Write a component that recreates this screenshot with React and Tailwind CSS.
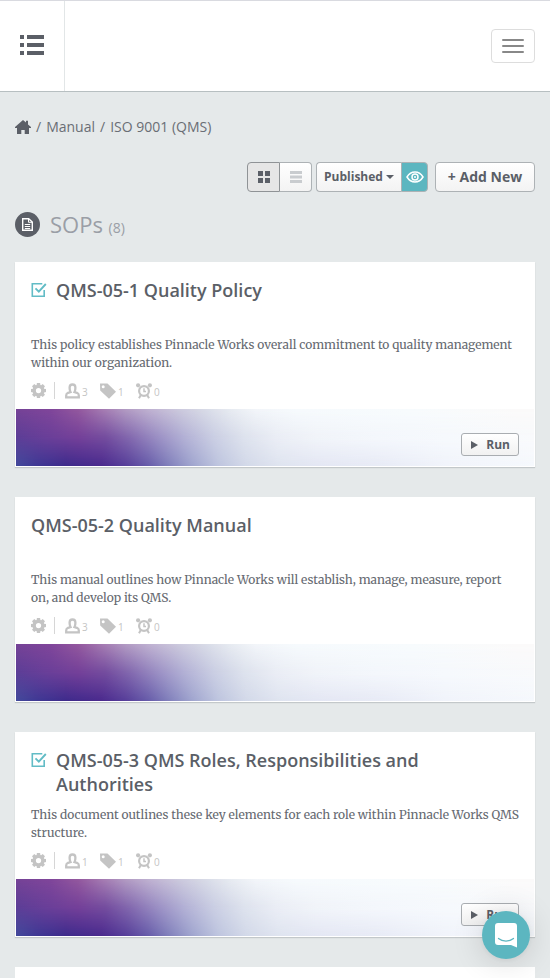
const SANS = "font-['Open_Sans','Noto_Sans',sans-serif]";

const BANNER_BASE =
  "bg-[linear-gradient(90deg,#434a9c_0px,#3f3894_22px,#3e2b8c_50px,#4b2a8e_85px,#573f9a_110px,#675caa_132px,#807fbb_152px,#a0a5cf_176px,#bec5df_202px,#d3d9e9_230px,#dfe4f0_262px,#e4e7f4_300px,#e8ebf6_360px,#f1f4fb_430px,#f6f9fd_520px)]";
const BANNER_MID =
  "bg-[linear-gradient(90deg,#5c3e97_0px,#693f99_30px,#744099_62px,#744d9f_90px,#8369af_114px,#998dc3_140px,#b2b0d5_168px,#cacee3_198px,#dde2ed_228px,#eaedf5_260px,#f1f4f9_300px,#f4f7fc_360px,#f6f9fd_430px,#f9fafc_520px)]";
const BANNER_TOP =
  "bg-[linear-gradient(90deg,#754296_0px,#80469a_35px,#93589e_62px,#a67db3_88px,#b29bc3_110px,#c0b3d2_135px,#cbc8dc_162px,#d8dbe7_190px,#e7ebf1_215px,#f2f5f9_240px,#f6fafd_280px,#f7fbfd_400px,#fbfafa_500px)]";

function GearIcon() {
  return (
    <svg width="15" height="15" viewBox="0 0 16 16" fill="currentColor" aria-hidden="true">
      <path
        fillRule="evenodd"
        d="M6.300 0h3.400l.3 2 .8.300L12.500 1.100l2.400 2.400-1.200 1.700.3.800 2 .3v3.400l-2 .3-.3.800 1.200 1.700-2.400 2.400-1.700-1.200-.8.300-.3 2H6.300l-.3-2-.8-.3-1.700 1.200-2.400-2.400 1.200-1.700-.3-.8-2-.3V6.300l2-.3.3-.8-1.200-1.700 2.400-2.400 1.700 1.200.8-.3zM8 5.200a2.800 2.800 0 1 0 0 5.600 2.800 2.800 0 0 0 0-5.600z"
      />
    </svg>
  );
}

function UserIcon() {
  return (
    <svg width="15" height="16" viewBox="0 0 15 16" fill="none" stroke="currentColor" strokeWidth="2.300" aria-hidden="true">
      <path d="M7.500 1.500C5.300 1.500 4.600 2.800 4.600 4.700c0 2 .3 3.200.9 4.300L3 9.800c-1.300.5-1.800 1.400-1.800 2.700v1.800h12.600v-1.800c0-1.300-.5-2.200-1.800-2.700L9.500 9c.6-1.100.9-2.300.9-4.300C10.400 2.800 9.700 1.500 7.500 1.500z" />
    </svg>
  );
}

function TagIcon() {
  return (
    <svg width="16" height="16" viewBox="0 0 16 16" fill="currentColor" aria-hidden="true">
      <path fillRule="evenodd" d="M0 .5h7.500L16 8.700 9 15.800.2 7.500zM3.200 2.200a1.500 1.500 0 1 0 0 3 1.500 1.500 0 0 0 0-3z" />
    </svg>
  );
}

function AlarmIcon() {
  return (
    <svg width="16" height="16" viewBox="0 0 16 16" fill="none" stroke="currentColor" aria-hidden="true">
      <circle cx="8" cy="8" r="4.900" strokeWidth="2.200" />
      <path d="M8 5.200v3.200h2" strokeWidth="1.500" />
      <path d="M4.800 12l-1.800 3.300M11.200 12l1.800 3.300" strokeWidth="2" />
      <circle cx="2.100" cy="2.300" r="2.100" fill="currentColor" stroke="none" />
      <circle cx="13.900" cy="2.300" r="2.100" fill="currentColor" stroke="none" />
    </svg>
  );
}

function CheckIcon() {
  return (
    <svg width="16" height="16" viewBox="0 0 16 16" fill="none" stroke="currentColor" className="mt-1 shrink-0 text-[#62bcc6]" aria-label="Approved" role="img">
      <path d="M11.300 1.800H1.300v12.400h11.900V8" strokeWidth="1.600" />
      <path d="M4.500 6.300l3.300 3.300L14.800 2" strokeWidth="1.900" />
    </svg>
  );
}

function Banner({ children }) {
  return (
    <div className={`relative mx-px mb-px h-[57px] ${BANNER_BASE}`}>
      <div className={`absolute inset-0 [mask-image:linear-gradient(#000_50%,transparent)] ${BANNER_MID}`} />
      <div className={`absolute inset-0 [mask-image:linear-gradient(#000,transparent_50%)] ${BANNER_TOP}`} />
      <div className="relative flex justify-end px-[15px] pt-6">{children}</div>
    </div>
  );
}

function Card({ title, text, approved, runnable, people }) {
  return (
    <article className="bg-white pt-4 shadow-[0_1px_1px_#c3c8ca]">
      <div className="flex min-h-12 gap-[9px] px-4">
        {approved && <CheckIcon />}
        <h2 className="text-lg/6 font-semibold text-[#5b5f67]">{title}</h2>
      </div>
      <p className="mt-2.5 min-h-9 px-4 font-['Merriweather','DejaVu_Serif_Condensed','DejaVu_Serif',serif] text-[12px]/[18px] text-[#666a71]">{text}</p>
      <div className="flex h-[37px] items-center px-4 text-[10px] text-[#c4c4c4]">
        <button type="button" aria-label="Settings"><GearIcon /></button>
        <span className="mx-2 h-[17px] border-l border-[#d6d6d6]" />
        <span className="ml-0.5 flex w-[35px] items-center gap-0.5"><UserIcon /><span className="mt-1">{people}</span></span>
        <span className="flex w-9 items-center gap-0.5"><TagIcon /><span className="mt-1">1</span></span>
        <span className="flex items-center gap-0.5"><AlarmIcon /><span className="mt-1">0</span></span>
      </div>
      <Banner>
        {runnable && (
          <button type="button" className="flex h-[23px] w-[58px] items-center justify-between rounded-[3px] border border-[#a9adb1] bg-linear-to-b from-white to-[#f1f1f1] px-2 text-xs font-bold text-[#5b5f67]">
            <svg width="8" height="8" viewBox="0 0 8 8" fill="currentColor" aria-hidden="true"><path d="M1 0l7 4-7 4z" /></svg>
            Run
          </button>
        )}
      </Banner>
    </article>
  );
}

const SOPS = [
  { title: "QMS-05-1 Quality Policy", text: "This policy establishes Pinnacle Works overall commitment to quality management within our organization.", approved: true, runnable: true, people: 3 },
  { title: "QMS-05-2 Quality Manual", text: "This manual outlines how Pinnacle Works will establish, manage, measure, report on, and develop its QMS.", approved: false, runnable: false, people: 3 },
  { title: "QMS-05-3 QMS Roles, Responsibilities and Authorities", text: "This document outlines these key elements for each role within Pinnacle Works QMS structure.", approved: true, runnable: true, people: 1 },
];

export default function App() {
  return (
    <div className={`flex min-h-screen flex-col bg-[#e5e9ea] text-[#5b5f67] ${SANS}`}>
      <header className="flex h-[92px] items-stretch justify-between border-t border-b border-t-[#d9dae0] border-b-[#b7bfc1] bg-white">
        <button type="button" aria-label="Sections" className="flex w-[65px] items-center justify-center border-r border-[#e2e6e7] pb-0.5">
          <svg width="24" height="20" viewBox="0 0 24 20" fill="currentColor" aria-hidden="true">
            <path d="M0 0h4v4H0zM7 0h17v4H7zM0 8h4v4H0zM7 8h17v4H7zM0 16h4v4H0zM7 16h17v4H7z" />
          </svg>
        </button>
        <button type="button" aria-label="Menu" className="mr-[15px] flex h-[34px] w-11 flex-col items-center justify-center gap-1 self-center rounded border border-[#dddddd]">
          <span className="h-0.5 w-[22px] rounded-[1px] bg-[#888888]" />
          <span className="h-0.5 w-[22px] rounded-[1px] bg-[#888888]" />
          <span className="h-0.5 w-[22px] rounded-[1px] bg-[#888888]" />
        </button>
      </header>

      <main className="flex flex-1 flex-col px-[15px] pt-[25px]">
        <nav aria-label="Breadcrumb" className="flex h-5 items-center gap-[5px] text-sm/5 text-[#6a6e75]">
          <a href="#home" aria-label="Home" className="text-[#5b5f67]">
            <svg width="16" height="14" viewBox="0 0 16 14" fill="currentColor" aria-hidden="true">
              <path d="M8 0l3 2.600V.7h2v3.700L16 7v1h-2v6h-4.300v-4H6.300v4H2V8H0V7z" />
            </svg>
          </a>
          <span>/</span>
          <a href="#manual">Manual</a>
          <span>/</span>
          <a href="#iso">ISO 9001 (QMS)</a>
        </nav>

        <div className="mt-[25px] flex h-[30px] justify-end">
          <button type="button" aria-label="Grid view" aria-pressed="true" className="flex w-[33px] items-center justify-center rounded-l border border-[#8f9396] bg-[#e6e6e6]">
            <svg width="12" height="12" viewBox="0 0 12 12" fill="currentColor" aria-hidden="true"><path d="M0 0h5v5H0zM7 0h5v5H7zM0 7h5v5H0zM7 7h5v5H7z" /></svg>
          </button>
          <button type="button" aria-label="List view" className="mr-1 flex w-8 items-center justify-center rounded-r border border-l-0 border-[#adb2b5] bg-linear-to-b from-white to-[#f3f3f3] text-[#c9cccf]">
            <svg width="12" height="12" viewBox="0 0 12 12" fill="currentColor" aria-hidden="true"><path d="M0 0h12v3H0zM0 4.500h12v3H0zM0 9h12v3H0z" /></svg>
          </button>
          <button type="button" aria-haspopup="menu" className="flex w-[85px] items-center justify-center gap-[3px] rounded-l border border-r-0 border-[#adb2b5] bg-linear-to-b from-white to-[#f3f3f3] text-xs font-bold">
            Published
            <svg width="8" height="4" viewBox="0 0 8 4" fill="currentColor" aria-hidden="true"><path d="M0 0h8L4 4z" /></svg>
          </button>
          <button type="button" aria-label="Preview" className="mr-[7px] flex w-[27px] items-center justify-center rounded-r border border-[#adb2b5] bg-[#5cb6c0] text-white">
            <svg className="shrink-0" width="18" height="12" viewBox="0 0 18 12" fill="none" stroke="currentColor" strokeWidth="1.500" aria-hidden="true">
              <path d="M1 6c2-3.300 4.800-5 8-5s6 1.700 8 5c-2 3.300-4.800 5-8 5S3 9.300 1 6z" />
              <circle cx="9" cy="6" r="3" />
              <circle cx="9" cy="6" r="1" fill="currentColor" stroke="none" />
            </svg>
          </button>
          <button type="button" className="w-[100px] rounded border border-[#adb2b5] bg-linear-to-b from-white to-[#f3f3f3] text-sm font-bold">+ Add New</button>
        </div>

        <div className="mt-4 flex h-8 items-center gap-2.5">
          <span className="flex size-[25px] items-center justify-center rounded-full bg-[#5b5f67] text-white">
            <svg width="11" height="13" viewBox="0 0 11 13" fill="none" stroke="currentColor" aria-hidden="true">
              <path d="M.7.7h6l3.600 3.300v8.300H.7z" strokeWidth="1.400" />
              <path d="M6.500 1v3.300H10" />
              <path d="M2.800 6.500h5.400M2.800 8.500h5.400M2.800 10.500h5.400" />
            </svg>
          </span>
          <h1 className="text-[22px]/8 text-[#9a9ea6]">SOPs <small className="text-sm">(8)</small></h1>
        </div>

        <div className="mt-[22px] flex flex-1 flex-col gap-[30px]">
          {SOPS.map((sop) => <Card key={sop.title} {...sop} />)}
          <article className="flex-1 bg-white" />
        </div>
      </main>

      <button type="button" aria-label="Open chat" className="fixed right-5 bottom-[19px] flex size-12 items-center justify-center rounded-full bg-[#5cb6c0] text-white shadow-[0_1px_6px_rgba(0,0,0,0.06),0_2px_32px_rgba(0,0,0,0.16)]">
        <svg width="22" height="25" viewBox="0 0 22 25" aria-hidden="true">
          <path d="M3 0h16a3 3 0 0 1 3 3v21.500l-6-2.500H3a3 3 0 0 1-3-3V3a3 3 0 0 1 3-3z" fill="currentColor" />
          <path d="M3.500 15.500c4 3.400 11 3.400 15 0" fill="none" stroke="#5cb6c0" strokeWidth="1.300" strokeLinecap="round" />
        </svg>
      </button>
    </div>
  );
}
